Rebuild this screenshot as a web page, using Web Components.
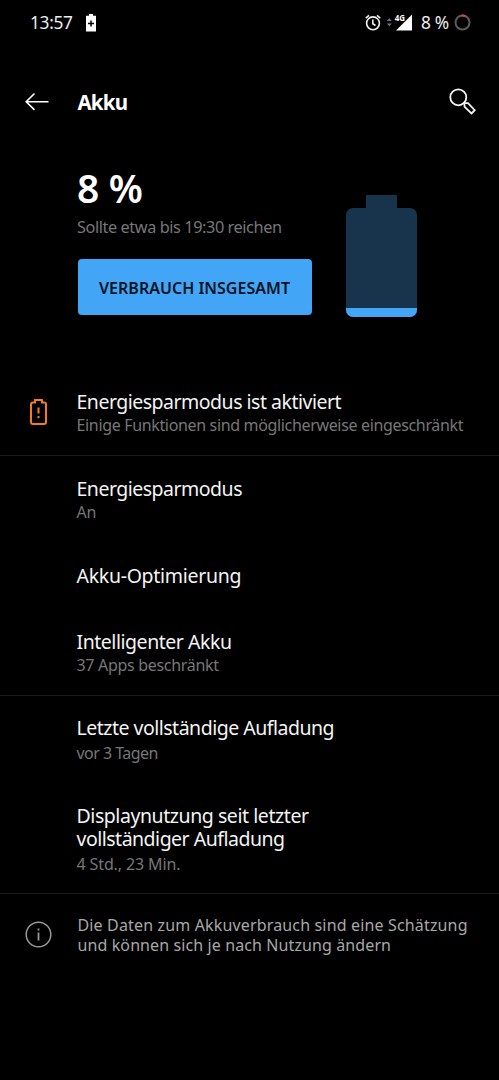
<!DOCTYPE html>
<html lang="de">
<head>
<meta charset="utf-8">
<title>Akku</title>
<style>
  body {
    margin: 0;
    background: #000;
    color: #f4f4f4;
    font-family: "Noto Sans", "Open Sans", sans-serif;
  }
</style>
</head>
<body>
<battery-screen>
  <status-bar></status-bar>
  <app-bar><fit-text width="50.5">Akku</fit-text></app-bar>
  <battery-hero level="8">
    <fit-text slot="level" width="66">8 %</fit-text>
    <fit-text slot="estimate" width="205">Sollte etwa bis 19:30 reichen</fit-text>
    <fit-text slot="action" width="191">VERBRAUCH INSGESAMT</fit-text>
  </battery-hero>
  <settings-group style="height: 126px; padding-top: 60px">
    <setting-row style="--gap: 2px">
      <battery-alert slot="icon"></battery-alert>
      <fit-text width="265">Energiesparmodus ist aktiviert</fit-text>
      <fit-text slot="summary" width="387">Einige Funktionen sind möglicherweise eingeschränkt</fit-text>
    </setting-row>
  </settings-group>
  <settings-group style="height: 240px; padding-top: 21px">
    <setting-row style="height: 87px; --gap: 2px">
      <fit-text width="166">Energiesparmodus</fit-text>
      <fit-text slot="summary" width="20">An</fit-text>
    </setting-row>
    <setting-row style="height: 66px">
      <fit-text width="165">Akku-Optimierung</fit-text>
    </setting-row>
    <setting-row style="--gap: 2px">
      <fit-text width="155.5">Intelligenter Akku</fit-text>
      <fit-text slot="summary" width="142.5">37 Apps beschränkt</fit-text>
    </setting-row>
  </settings-group>
  <settings-group style="height: 198px; padding-top: 20px">
    <setting-row style="height: 88px; --gap: 4px">
      <fit-text width="258">Letzte vollständige Aufladung</fit-text>
      <fit-text slot="summary" width="82">vor 3 Tagen</fit-text>
    </setting-row>
    <setting-row style="--gap: 4px">
      <fit-text width="232.5">Displaynutzung seit letzter</fit-text>
      <fit-text width="208.5">vollständiger Aufladung</fit-text>
      <fit-text slot="summary" width="104">4 Std., 23 Min.</fit-text>
    </setting-row>
  </settings-group>
  <info-note>
    <fit-text width="390">Die Daten zum Akkuverbrauch sind eine Schätzung</fit-text>
    <fit-text width="313.5">und können sich je nach Nutzung ändern</fit-text>
  </info-note>
</battery-screen>

<script>
class BaseElement extends HTMLElement {
  connectedCallback() {
    if (this.shadowRoot) return;
    this.attachShadow({ mode: "open" });
    const template = document.createElement("template");
    template.innerHTML = this.template();
    this.shadowRoot.appendChild(template.content.cloneNode(true));
  }
}

customElements.define("battery-screen", class extends BaseElement {
  template() {
    return `
      <style>
        :host { display: flex; flex-direction: column; height: 1080px; overflow: hidden; background: #000; }
      </style>
      <slot></slot>
    `;
  }
});

customElements.define("status-bar", class extends BaseElement {
  template() {
    return `
      <style>
        :host { display: flex; align-items: center; box-sizing: border-box; height: 45px; padding: 0 28.5px 0 30px; font-size: 17.3px; line-height: 24px; color: #eee; }
        svg { display: block; flex: none; }
        .battery { margin-left: 13px; }
        .right { display: flex; align-items: center; margin-left: auto; }
        .signal { margin: 0 8px 0 5px; }
        .ring { margin-left: 4.5px; }
        text { font: 700 8.5px "Noto Sans", sans-serif; fill: #fff; }
      </style>
      <fit-text width="43">13:57</fit-text>
      <svg class="battery" width="10" height="18" viewBox="0 0 10 18">
        <path d="M3 0h4v1.800h3V17.500H0V1.800h3z" fill="#fff"/>
        <path d="M5 6.500v6M2 9.500h6" stroke="#000" stroke-width="1.500"/>
      </svg>
      <div class="right">
        <svg width="16" height="18" viewBox="0 0 16 18" fill="none" stroke="#f2f2f2" stroke-width="1.600">
          <circle cx="8" cy="9.300" r="6.400"/>
          <path d="M7.800 5.500v4.200l2.700 1.800M.8 4.100L4 1.400M15.200 4.100L12 1.400"/>
        </svg>
        <svg class="signal" width="27" height="24" viewBox="0 0 27 24">
          <path d="M.8 10L3.300 7.300l2.500 2.700zM.8 12.500l2.500 2.700L5.800 12.500z" fill="#777"/>
          <path d="M26 3.500V19.500H10z" fill="#fff"/>
          <path d="M8 3h11.200v7.300H8z" fill="#000"/>
          <text x="8.700" y="9.500" textLength="10.300" lengthAdjust="spacingAndGlyphs">4G</text>
        </svg>
        <fit-text width="28">8 %</fit-text>
        <svg class="ring" width="17" height="17" viewBox="0 0 17 17" fill="none" stroke-width="2">
          <circle cx="8.500" cy="8.500" r="7" stroke="#5c5c5c"/>
          <path d="M7.500 1.500A7 7 0 0 1 11.500 2.200" stroke="#e0433a"/>
        </svg>
      </div>
    `;
  }
});

customElements.define("app-bar", class extends BaseElement {
  template() {
    return `
      <style>
        :host { display: flex; align-items: center; box-sizing: border-box; height: 113px; padding: 0 22px 0 25px; font-size: 20.5px; font-weight: 700; line-height: 26px; color: #fff; }
        svg { display: block; flex: none; }
        .title { margin-left: 28.5px; }
        .search { margin-left: auto; }
      </style>
      <svg width="24" height="20" viewBox="0 0 24 20" fill="none" stroke="#fff" stroke-width="1.600">
        <path d="M9.500 1.500L1.200 9.700l8.300 8.200M1.200 9.700H23.500"/>
      </svg>
      <div class="title"><slot></slot></div>
      <svg class="search" width="28" height="28" viewBox="0 0 28 28" fill="none" stroke="#f4f4f4" stroke-width="1.800">
        <circle cx="9.300" cy="9.300" r="8"/>
        <path d="M15.300 15.200H19l6.700 7-3.200 3.300-6.900-6.700z"/>
      </svg>
    `;
  }
});

customElements.define("battery-hero", class extends BaseElement {
  template() {
    const fill = Math.round(Number(this.getAttribute("level")) * 1.1);
    return `
      <style>
        :host { display: flex; align-items: flex-start; box-sizing: border-box; height: 172px; padding: 8px 0 0 77px; }
        .info { width: 235px; }
        .level { height: 44px; line-height: 44px; font-size: 39px; font-weight: 600; color: #fff; }
        .estimate { margin-top: 7px; height: 20px; line-height: 20px; font-size: 16.3px; color: #777; }
        .button { display: flex; align-items: center; justify-content: center; box-sizing: border-box; width: 234px; height: 56px; margin: 22px 0 0 .5px; border: 0; padding: 2px 0 0; border-radius: 4px; background: #42a5f5; color: #04121f; font: inherit; font-size: 16px; font-weight: 600; }
        svg { display: block; margin: 29px 0 0 34px; }
      </style>
      <div class="info">
        <div class="level"><slot name="level"></slot></div>
        <div class="estimate"><slot name="estimate"></slot></div>
        <button class="button"><slot name="action"></slot></button>
      </div>
      <svg width="71" height="122" viewBox="0 0 71 122">
        <defs><clipPath id="body"><rect y="13" width="71" height="109" rx="7"/></clipPath></defs>
        <rect x="20" width="31" height="14" fill="#17344c"/>
        <g clip-path="url(#body)">
          <rect y="13" width="71" height="109" fill="#17344c"/>
          <rect y="${122 - fill}" width="71" height="${fill}" fill="#42a5f5"/>
        </g>
      </svg>
    `;
  }
});

customElements.define("settings-group", class extends BaseElement {
  template() {
    return `
      <style>
        :host { display: block; flex: none; box-sizing: border-box; border-bottom: 1px solid #1b1b1b; }
      </style>
      <slot></slot>
    `;
  }
});

customElements.define("setting-row", class extends BaseElement {
  template() {
    return `
      <style>
        :host { display: flex; }
        .icon { display: flex; align-items: flex-start; justify-content: center; width: 76.5px; flex: none; }
        .title { font-size: 19.5px; line-height: 23px; }
        .summary { margin-top: var(--gap, 3px); font-size: 16px; line-height: 20px; color: #777; }
      </style>
      <div class="icon"><slot name="icon"></slot></div>
      <div>
        <div class="title"><slot></slot></div>
        <div class="summary"><slot name="summary"></slot></div>
      </div>
    `;
  }
});

customElements.define("battery-alert", class extends BaseElement {
  template() {
    return `
      <style>
        :host { display: block; margin-top: 8.5px; }
        svg { display: block; }
      </style>
      <svg width="17" height="26" viewBox="0 0 17 26" fill="none" stroke="#f57c1c" stroke-width="2">
        <path d="M5 3.500V1h7v2.500h2q2 0 2 2V23q0 2-2 2H3q-2 0-2-2V5.500q0-2 2-2z"/>
        <path d="M8.500 8.500v6M8.500 17v2.300"/>
      </svg>
    `;
  }
});

customElements.define("info-note", class extends BaseElement {
  template() {
    return `
      <style>
        :host { display: flex; padding: 21px 0 0 25px; font-size: 16px; line-height: 20px; color: #a8a8a8; }
        svg { display: block; margin: 5.5px 25.5px 0 0; }
      </style>
      <svg width="27" height="27" viewBox="0 0 27 27" fill="none" stroke="#999" stroke-width="1.500">
        <circle cx="13.500" cy="13.500" r="12.300"/>
        <path d="M13.500 11.500v8M13.500 7.500v2" stroke-width="1.800"/>
      </svg>
      <div><slot></slot></div>
    `;
  }
});

// One line of text whose tracking is set so that it fills the given width
customElements.define("fit-text", class extends BaseElement {
  template() {
    return `
      <style>
        :host { display: block; width: max-content; white-space: nowrap; }
      </style>
      <slot></slot>
    `;
  }

  connectedCallback() {
    super.connectedCallback();
    this.fit();
    // once more when the surrounding elements have passed their font down
    requestAnimationFrame(() => this.fit());
  }

  fit() {
    this.style.letterSpacing = "0px";
    this.style.width = "max-content";
    const width = parseFloat(this.getAttribute("width"));
    const natural = this.getBoundingClientRect().width;
    const gaps = this.textContent.length - 1;
    this.style.letterSpacing = `${(width - natural) / gaps}px`;
    this.style.width = `${width}px`;
  }
});
</script>
</body>
</html>
